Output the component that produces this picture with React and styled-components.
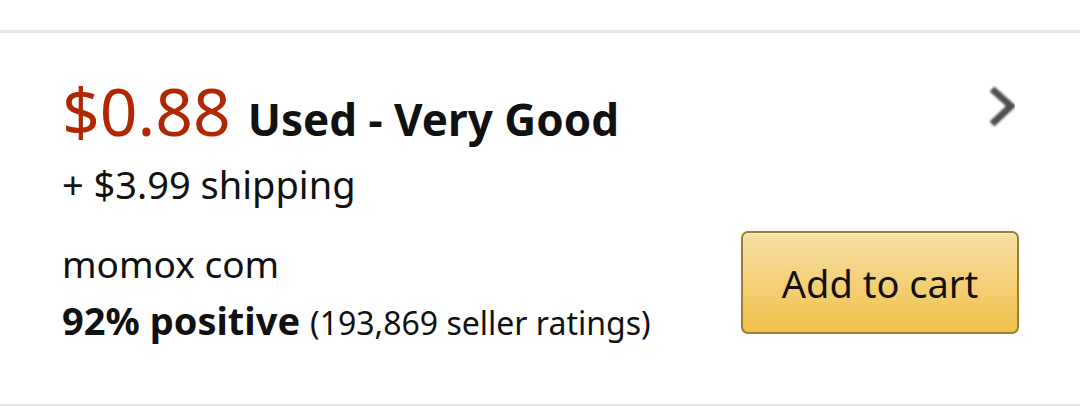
import React from 'react';
import styled, { createGlobalStyle } from 'styled-components';

const GlobalStyle = createGlobalStyle`
    html, body {
        margin: 0;
        padding: 0;
        background: #ffffff;
    }

    body {
        font-family: "Noto Sans", "Open Sans", Arial, sans-serif;
        color: #111111;
    }
`;

const Page = styled.div`
    width: 1080px;
    height: 406px;
    padding-top: 30px;
    box-sizing: border-box;
    overflow: hidden;
`;

const OfferCard = styled.section`
    height: 376px;
    box-sizing: border-box;
    padding: 37px 61px 0 62px;

    border-top: 3px solid #e7e7e7;
    border-bottom: 2px solid #e7e7e7;
`;

const TopRow = styled.div`
    display: flex;
    justify-content: space-between;
    align-items: flex-start;
`;

const PriceLine = styled.div`
    display: flex;
    align-items: baseline;
    gap: 17px;
`;

const Price = styled.span`
    font-size: 66px;
    line-height: 80px;
    color: #b12704;
`;

const Condition = styled.span`
    font-size: 44px;
    font-weight: 700;
    line-height: 60px;
    color: #111111;
`;

const ChevronButton = styled.div`
    margin-top: 14px;
    margin-right: 2px;
    width: 32px;
    height: 46px;
`;

const Shipping = styled.div`
    margin-top: 12px;
    font-size: 38px;
    line-height: 44px;
`;

const BottomRow = styled.div`
    margin-top: 25px;
    display: flex;
    justify-content: space-between;
    align-items: flex-start;
`;

const SellerInfo = styled.div`
    margin-top: 5px;
`;

const SellerName = styled.div`
    font-size: 37px;
    line-height: 56px;
`;

const RatingLine = styled.div`
    font-size: 38px;
    line-height: 56px;
    white-space: nowrap;
`;

const Positive = styled.span`
    font-weight: 700;
`;

const RatingCount = styled.span`
    margin-left: 10px;
    font-size: 32px;
`;

const AddToCartButton = styled.button`
    width: 278px;
    height: 103px;
    padding: 0;

    font-family: "Noto Sans", "Open Sans", Arial, sans-serif;
    font-size: 38px;
    color: #111111;

    border: 2px solid #9c7e31;
    border-radius: 7px;
    outline: none;

    background: linear-gradient(to bottom, #f7dfa5, #f0c14b);
    box-shadow: inset 0 1px 0 rgba(255, 255, 255, 0.6);
`;

const Chevron = () => (
    <svg width="32" height="46" viewBox="0 0 32 46">
        <defs>
            <filter id="soft" x="-20%" y="-20%" width="140%" height="140%">
                <feGaussianBlur stdDeviation="0.9" />
            </filter>
        </defs>
        <polyline
            points="7,5 26,22 7,40"
            fill="none"
            stroke="#4f4f4f"
            strokeWidth="7"
            strokeLinejoin="miter"
            filter="url(#soft)"
        />
    </svg>
);

const App = () => {
    return <Page>
        <GlobalStyle />
        <OfferCard>
            <TopRow>
                <PriceLine>
                    <Price>$0.88</Price>
                    <Condition>Used - Very Good</Condition>
                </PriceLine>
                <ChevronButton><Chevron /></ChevronButton>
            </TopRow>
            <Shipping>+ $3.99 shipping</Shipping>
            <BottomRow>
                <SellerInfo>
                    <SellerName>momox com</SellerName>
                    <RatingLine>
                        <Positive>92% positive</Positive>
                        <RatingCount>(193,869 seller ratings)</RatingCount>
                    </RatingLine>
                </SellerInfo>
                <AddToCartButton>Add to cart</AddToCartButton>
            </BottomRow>
        </OfferCard>
    </Page>
}

export default App;
